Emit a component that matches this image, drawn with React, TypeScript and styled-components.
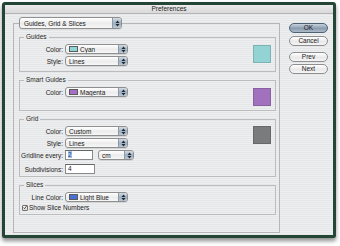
import styled, { createGlobalStyle } from 'styled-components';

const GlobalStyle = createGlobalStyle`
  html, body {
    margin: 0;
    padding: 0;
    background: #fff;
  }
  body {
    font-family: "Liberation Sans", Arial, sans-serif;
    font-size: 6.5px;
    color: #1c1c1c;
  }
`;

const Page = styled.div`
  width: 340px;
  height: 246px;
  padding: 2px 0 0 2px;
  box-sizing: border-box;
`;

const Window = styled.div`
  width: 334px;
  height: 236px;
  box-sizing: border-box;
  border: 3px solid #244636;
  border-radius: 3px 3px 2px 2px;
  background: repeating-linear-gradient(
    to bottom,
    #eeeff0 0,
    #eeeff0 1px,
    #e5e6e7 1px,
    #e5e6e7 2px
  );
  box-shadow: 0 3px 4px rgba(0, 0, 0, 0.45);
  display: flex;
  flex-direction: column;
`;

const TitleBar = styled.div`
  height: 8px;
  line-height: 8px;
  text-align: center;
  border-bottom: 1px solid #b4b4b4;
  background: linear-gradient(to bottom, #ececec, #d9d9d9);
  color: #222;
`;

const Body = styled.div`
  display: flex;
  align-items: flex-start;
  padding: 3px 5px 0 8px;
`;

const Outer = styled.fieldset`
  margin: 0;
  width: 267px;
  box-sizing: border-box;
  border: 1px solid #b6b6b6;
  padding: 4px 3px 17px 5px;
  min-inline-size: 0;
`;

const OuterLegend = styled.legend`
  padding: 0;
  margin-left: 0;
`;

const Group = styled.fieldset`
  margin: 0;
  border: 1px solid #bcbcbc;
  padding: 3px 4px ${(p: { $bottom?: number }) => p.$bottom ?? 4}px 0;
  min-inline-size: 0;
  & + & {
    margin-top: 4px;
  }
`;

const GroupTitle = styled.legend`
  padding: 0 2px;
  margin-left: 4px;
  height: 8px;
  line-height: 8px;
  color: #2a2a2a;
`;

const GroupBody = styled.div`
  display: flex;
  align-items: flex-start;
  justify-content: space-between;
`;

const Fields = styled.div`
  display: flex;
  flex-direction: column;
`;

const Row = styled.div<{ $top?: number }>`
  display: flex;
  align-items: center;
  margin-top: ${(p) => p.$top ?? 0}px;
`;

const Label = styled.span`
  width: 43px;
  text-align: right;
  white-space: nowrap;
  padding-right: 2px;
`;

const Swatch = styled.div<{ $color: string; $top: number }>`
  width: 18px;
  height: 18px;
  margin-top: ${(p) => p.$top}px;
  background: ${(p) => p.$color};
  border: 1px solid rgba(0, 0, 0, 0.15);
  box-sizing: border-box;
`;

const Popup = styled.div<{ $w: number; $h?: number }>`
  display: flex;
  width: ${(p) => p.$w}px;
  height: ${(p) => p.$h ?? 10}px;
  box-sizing: border-box;
  border: 1px solid #8f8f8f;
  border-radius: 3px;
  background: linear-gradient(to bottom, #ffffff, #ececec 55%, #f7f7f7);
  overflow: hidden;
  box-shadow: 0 1px 0 rgba(0, 0, 0, 0.08);
`;

const PopupText = styled.div<{ $pad?: number }>`
  flex: 1;
  display: flex;
  align-items: center;
  gap: 1px;
  padding-left: ${(p) => p.$pad ?? 3}px;
  white-space: nowrap;
  color: #1a1a1a;
`;

const PopupArrows = styled.div`
  width: 8px;
  display: flex;
  align-items: center;
  justify-content: center;
  border-left: 1px solid #8d99a6;
  background: linear-gradient(to bottom, #d3dbe3, #9fb0c0 55%, #bcc8d4);
`;

const ColorChip = styled.span<{ $color: string }>`
  width: 9px;
  height: 6px;
  background: ${(p) => p.$color};
  border: 1px solid #5b5b5b;
  box-sizing: border-box;
  margin-right: 1px;
`;

const TextField = styled.div<{ $w: number }>`
  width: ${(p) => p.$w}px;
  height: 10px;
  box-sizing: border-box;
  border: 1px solid #8a8a8a;
  border-top-color: #666;
  background: #fff;
  padding-left: 2px;
  line-height: 8px;
  margin-right: 5px;
`;

const Selected = styled.span`
  background: #a9c6ec;
  color: #1a3c8a;
`;

const CheckRow = styled.div`
  display: flex;
  align-items: center;
  gap: 1px;
  margin: 2px 0 0 2px;
`;

const CheckBox = styled.span`
  width: 6px;
  height: 6px;
  box-sizing: border-box;
  border: 1px solid #6f6f6f;
  border-radius: 1px;
  background: linear-gradient(to bottom, #fff, #dcdcdc);
  display: flex;
  align-items: center;
  justify-content: center;
  overflow: visible;
`;

const Buttons = styled.div`
  display: flex;
  flex-direction: column;
  margin-left: 9px;
  padding-top: 6px;
`;

const Button = styled.div<{ $primary?: boolean; $top?: number }>`
  width: 39px;
  height: 10px;
  box-sizing: border-box;
  margin-top: ${(p) => p.$top ?? 0}px;
  border: 1px solid ${(p) => (p.$primary ? '#4f6274' : '#8e8e8e')};
  border-radius: 5px;
  background: ${(p) =>
    p.$primary
      ? 'linear-gradient(to bottom, #c7d2dd, #8a9cae 55%, #aebccb)'
      : 'linear-gradient(to bottom, #ffffff, #e9e9e9 55%, #f5f5f5)'};
  text-align: center;
  line-height: 8px;
  color: #1a1a1a;
`;

const Arrows = () => (
  <svg width="5" height="7" viewBox="0 0 5 7">
    <path d="M0.5 3 L2.5 0.6 L4.5 3 Z M0.5 4 L2.5 6.4 L4.5 4 Z" fill="#1e2a36" />
  </svg>
);

type Choice = { text: string; chip?: string; w?: number };

const Select = ({ text, chip, w = 63 }: Choice) => (
  <Popup $w={w}>
    <PopupText>
      {chip && <ColorChip $color={chip} />}
      {text}
    </PopupText>
    <PopupArrows>
      <Arrows />
    </PopupArrows>
  </Popup>
);

const App = () => (
  <Page>
    <GlobalStyle />
    <Window>
      <TitleBar>Preferences</TitleBar>
      <Body>
        <Outer>
          <OuterLegend>
            <Popup $w={103} $h={12}>
              <PopupText $pad={4}>Guides, Grid &amp; Slices</PopupText>
              <PopupArrows>
                <Arrows />
              </PopupArrows>
            </Popup>
          </OuterLegend>

          <Group $bottom={5}>
            <GroupTitle>Guides</GroupTitle>
            <GroupBody>
              <Fields>
                <Row>
                  <Label>Color:</Label>
                  <Select text="Cyan" chip="#8fd6d8" />
                </Row>
                <Row $top={2}>
                  <Label>Style:</Label>
                  <Select text="Lines" />
                </Row>
              </Fields>
              <Swatch $color="#93d3d4" $top={1} />
            </GroupBody>
          </Group>

          <Group>
            <GroupTitle>Smart Guides</GroupTitle>
            <GroupBody>
              <Fields>
                <Row>
                  <Label>Color:</Label>
                  <Select text="Magenta" chip="#a46fc4" />
                </Row>
              </Fields>
              <Swatch $color="#a171bd" $top={1} />
            </GroupBody>
          </Group>

          <Group $bottom={2}>
            <GroupTitle>Grid</GroupTitle>
            <GroupBody>
              <Fields>
                <Row>
                  <Label>Color:</Label>
                  <Select text="Custom" />
                </Row>
                <Row $top={2}>
                  <Label>Style:</Label>
                  <Select text="Lines" />
                </Row>
                <Row $top={2}>
                  <Label>Gridline every:</Label>
                  <TextField $w={28}>
                    <Selected>2</Selected>
                  </TextField>
                  <Select text="cm" w={36} />
                </Row>
                <Row $top={4}>
                  <Label>Subdivisions:</Label>
                  <TextField $w={30}>4</TextField>
                </Row>
              </Fields>
              <Swatch $color="#7a7b7c" $top={0} />
            </GroupBody>
          </Group>

          <Group $bottom={3}>
            <GroupTitle>Slices</GroupTitle>
            <Fields>
              <Row>
                <Label>Line Color:</Label>
                <Select text="Light Blue" chip="#4a6fd4" />
              </Row>
              <CheckRow>
                <CheckBox>
                  <svg width="7" height="7" viewBox="0 0 7 7">
                    <path d="M1 3.4 L2.8 5.6 L6.6 0.4" stroke="#1b1b1b" strokeWidth="1.3" fill="none" />
                  </svg>
                </CheckBox>
                Show Slice Numbers
              </CheckRow>
            </Fields>
          </Group>
        </Outer>

        <Buttons>
          <Button $primary>OK</Button>
          <Button $top={3}>Cancel</Button>
          <Button $top={6}>Prev</Button>
          <Button $top={2}>Next</Button>
        </Buttons>
      </Body>
    </Window>
  </Page>
);

export default App;
